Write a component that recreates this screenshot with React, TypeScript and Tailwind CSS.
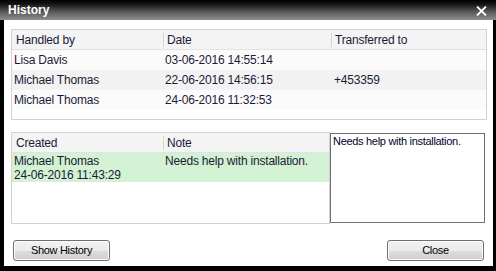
import React from "react";

const rows = [
  { by: "Lisa Davis", date: "03-06-2016 14:55:14", to: "" },
  { by: "Michael Thomas", date: "22-06-2016 14:56:15", to: "+453359" },
  { by: "Michael Thomas", date: "24-06-2016 11:32:53", to: "" },
];

function Divider() {
  return <div className="w-px h-[14px] bg-[#d5d5d5] shrink-0" />;
}

function Button({ label }: { label: string }) {
  return (
    <button className="w-[97px] h-[21px] rounded-[3px] border border-[#707070] bg-[linear-gradient(to_bottom,#f2f2f2_0%,#ebebeb_50%,#dddddd_51%,#cfcfcf_100%)] text-[11px] tracking-[-0.3px] text-black flex items-center justify-center shadow-[inset_0_0_0_1px_#fcfcfc]">
      {label}
    </button>
  );
}

export default function App() {
  return (
    <div
      className="w-[496px] h-[271px] bg-black flex flex-col overflow-hidden"
      style={{ fontFamily: '"Liberation Sans", Arial, sans-serif' }}
    >
      {/* Title bar */}
      <div className="h-[20px] shrink-0 flex items-center justify-between pl-[8px] pr-[9px] bg-[linear-gradient(to_bottom,#000000_0%,#141414_20%,#5a5a5a_60%,#8e8e8e_100%)]">
        <span className="text-white font-bold text-[12px] leading-none">History</span>
        <svg width="11" height="10" viewBox="0 0 11 10" className="mt-[1px]">
          <path d="M1 0.5 L10 9.5 M10 0.5 L1 9.5" stroke="white" strokeWidth="1.8" />
        </svg>
      </div>

      {/* Client area */}
      <div className="flex-1 ml-[4px] mr-[3px] mb-[5px] bg-white flex flex-col pt-[9px] pl-[7px] pr-[6px] text-[12px] tracking-[-0.2px] text-[#1b1b36]">
        {/* Top list */}
        <div className="h-[91px] border border-[#d2d2d2] bg-white flex flex-col">
          <div className="h-[20px] shrink-0 flex items-center bg-[#f4f4f4] border-b border-[#e2e2e2]">
            <div className="w-[151px] pl-[4px]">Handled by</div>
            <Divider />
            <div className="w-[167px] pl-[3px]">Date</div>
            <Divider />
            <div className="flex-1 pl-[3px]">Transferred to</div>
          </div>
          {rows.map((r, i) => (
            <div
              key={i}
              className={`h-[20px] shrink-0 flex items-center ${i % 2 === 1 ? "bg-[#f2f2f2]" : "bg-[#fbfbfb]"}`}
            >
              <div className="w-[151px] pl-[2px]">{r.by}</div>
              <div className="w-[168px] pl-[2px]">{r.date}</div>
              <div className="flex-1 pl-[3px]">{r.to}</div>
            </div>
          ))}
        </div>

        {/* Lower section */}
        <div className="mt-[12px] h-[92px] flex">
          <div className="w-[319px] h-[92px] border border-[#d2d2d2] bg-white flex flex-col">
            <div className="h-[20px] shrink-0 flex items-center bg-[#f4f4f4] border-b border-[#e2e2e2]">
              <div className="w-[151px] pl-[4px]">Created</div>
              <Divider />
              <div className="flex-1 pl-[3px]">Note</div>
            </div>
            <div className="h-[29px] shrink-0 flex bg-[#d3f1d3] pt-[1px] leading-[14px]">
              <div className="w-[151px] pl-[2px]">
                <div>Michael Thomas</div>
                <div>24-06-2016 11:43:29</div>
              </div>
              <div className="flex-1 pl-[2px]">Needs help with installation.</div>
            </div>
          </div>
          <div className="w-[155px] h-[90px] mt-[1px] border border-[#707070] bg-white pl-[2px] pt-[1px] text-[11px] tracking-[-0.3px] text-[#000030] leading-[13px]">
            Needs help with installation.
          </div>
        </div>

        {/* Buttons */}
        <div className="mt-[16px] flex justify-between pl-[2px] pr-[3px]">
          <Button label="Show History" />
          <Button label="Close" />
        </div>
      </div>
    </div>
  );
}
